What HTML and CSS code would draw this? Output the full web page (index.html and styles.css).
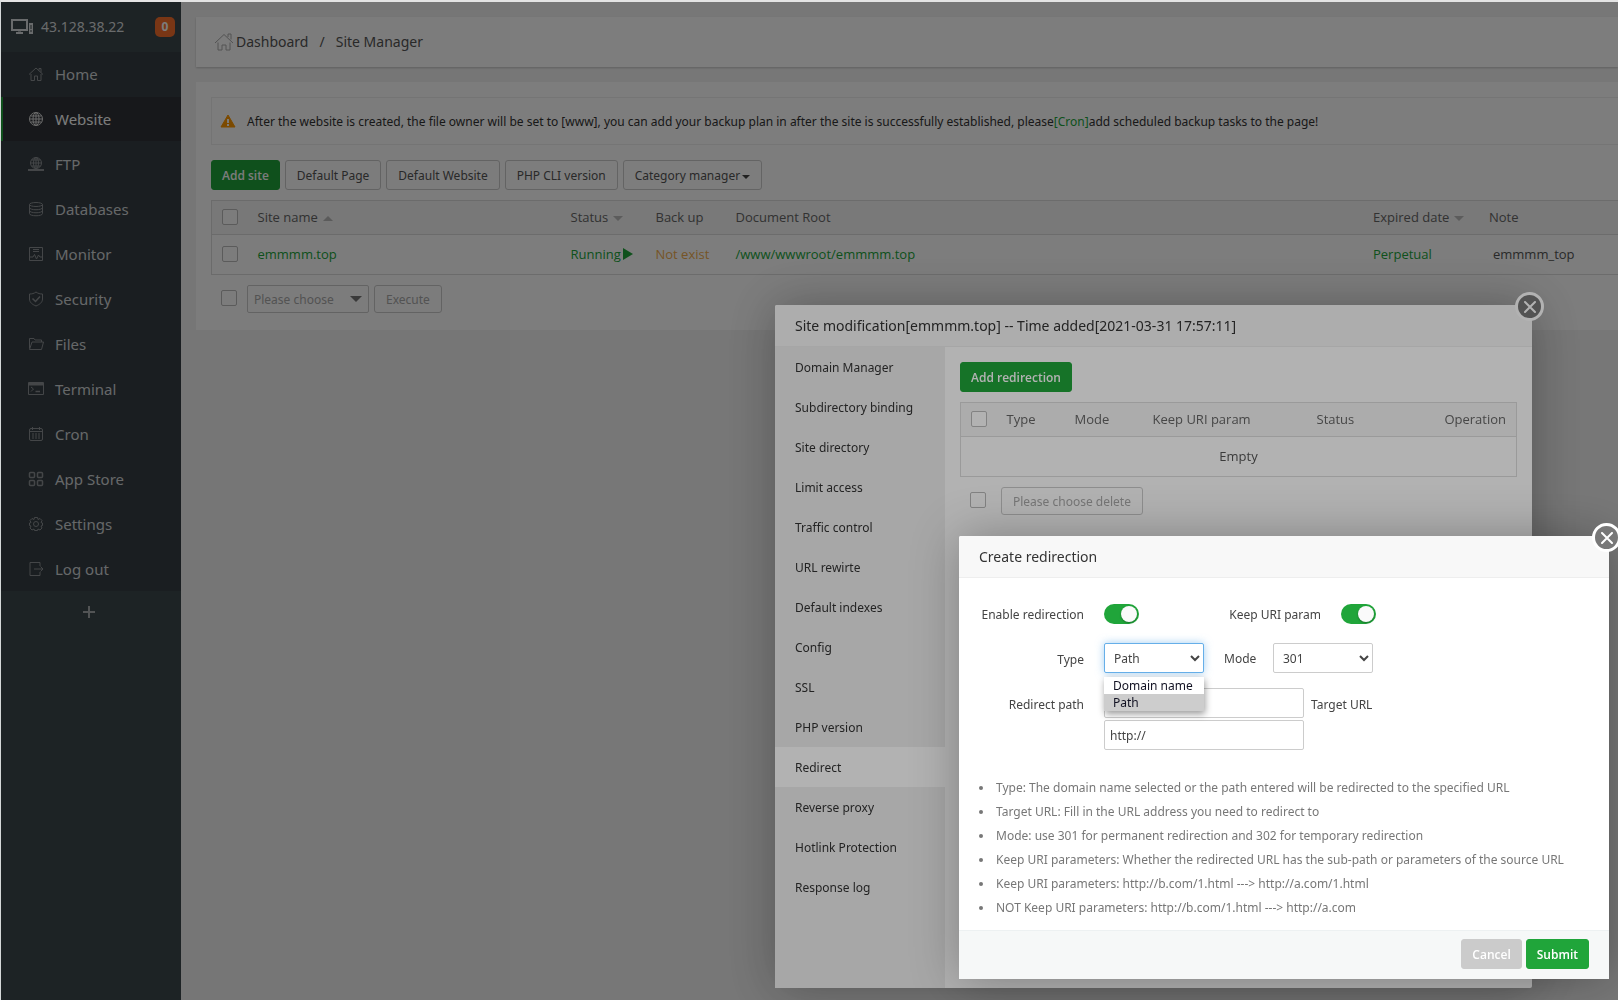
FILE: index.html
```html
<!DOCTYPE html>
<html lang="en">
<head>
<meta charset="utf-8">
<title>Site Manager</title>
<link rel="stylesheet" href="styles.css">
</head>
<body>
<div class="app">
  <aside class="sidebar">
    <div class="server">
      <svg class="server-icon" width="24" height="18" viewBox="0 0 24 18" fill="none" stroke="currentColor" stroke-width="2"><path d="M2 2h15v10H2z"/><path d="M6 15h7" /><path d="M8 13h3" stroke-width="1"/><path d="M19 5h4v11h-4z" fill="currentColor" stroke="none"/><path d="M21 7v4M20 13h2" stroke="#3d484d" stroke-width="1"/></svg>
      <span class="server-ip">43.128.38.22</span>
      <span class="server-badge">0</span>
    </div>
    <nav class="menu">
      <a href="#"><svg class="icon" viewBox="0 0 16 16"><path d="M1 8.500 8 2l7 6.500M3 8v6.500h3.500V10h3v4.500H13V8M11 4.500v-2h2v4"/></svg>Home</a>
      <a href="#" class="active"><svg class="icon" viewBox="0 0 16 16"><circle cx="8" cy="8" r="6.500"/><ellipse cx="8" cy="8" rx="3" ry="6.500"/><path d="M8 1.500v13M1.500 8h13M2.500 5h11M2.500 11h11"/></svg>Website</a>
      <a href="#"><svg class="icon" viewBox="0 0 16 16"><circle cx="8" cy="7" r="5.500"/><ellipse cx="8" cy="7" rx="2.500" ry="5.500"/><path d="M8 1.500v11M2.500 7h11M3.500 4h9M3.500 10h9"/><path d="M0 14h16" stroke-width="2"/></svg>FTP</a>
      <a href="#"><svg class="icon" viewBox="0 0 16 16"><ellipse cx="8" cy="3.500" rx="6.500" ry="2"/><path d="M1.500 3.500v9c0 3 13 3 13 0v-9M1.500 6.500c0 3 13 3 13 0M1.500 9.500c0 3 13 3 13 0"/></svg>Databases</a>
      <a href="#"><svg class="icon" viewBox="0 0 16 16"><path d="M1.500 1.500h13v13h-13zM5 3.500h6M5 5.500h6M2 11h3l1.500-2.500L8.500 13l2-4 1.500 2h2"/></svg>Monitor</a>
      <a href="#"><svg class="icon" viewBox="0 0 16 16"><path d="M8 1c2 1.500 4 2 6.500 2v5c0 3.500-3 5.500-6.500 7-3.500-1.500-6.500-3.500-6.500-7V3C4 3 6 2.500 8 1z"/><path d="M4.500 7.500l3 3 4.500-5" stroke-width="1.500"/></svg>Security</a>
      <a href="#"><svg class="icon" viewBox="0 0 16 16"><path d="M1.500 12.500v-10H6l1 1.500h6.500v2M1.500 13.500 4 6h11.500l-2 7.500z"/></svg>Files</a>
      <a href="#"><svg class="icon" viewBox="0 0 16 16"><path d="M.5 1.500h15v12H.5zM3 6l2.500 2L3 10.500"/><path d="M7.500 10.500h4.500" stroke-width="1.500"/><path d="M1 3h14" stroke-width="3"/></svg>Terminal</a>
      <a href="#"><svg class="icon" viewBox="0 0 16 16"><rect x="1.500" y="2.500" width="13" height="12" rx="1.500"/><path d="M4.500 1v3M11.500 1v3M1.500 5.500h13"/><path d="M4 8h8M4 10h8M4 12h8" stroke-dasharray="2 1"/></svg>Cron</a>
      <a href="#"><svg class="icon icon-bold" viewBox="0 0 16 16"><rect x="1.500" y="1.500" width="5" height="5" rx="1"/><rect x="9.500" y="1.500" width="5" height="5" rx="1"/><rect x="1.500" y="9.500" width="5" height="5" rx="1"/><rect x="9.500" y="9.500" width="5" height="5" rx="1"/></svg>App Store</a>
      <a href="#"><svg class="icon" viewBox="0 0 16 16"><path d="M6.500 1.500h3l.5 2 2-1 2 2-1 2 1.500.5v2.500l-1.500.5 1 2-2 2-2-1-.5 1.500h-3L6 13l-2 1-2-2 1-2-1.500-.5V7L3 6.500l-1-2 2-2 2 1z"/><circle cx="8" cy="8" r="2.500"/></svg>Settings</a>
      <a href="#"><svg class="icon" viewBox="0 0 16 16"><path d="M12 5V1.500H2v13h10V11M6 8h9M12.500 5.500 15 8l-2.500 2.500"/></svg>Log out</a>
    </nav>
    <button class="menu-add" type="button" aria-label="Add menu item"><svg width="14" height="14" viewBox="0 0 14 14" stroke="currentColor" stroke-width="2"><path d="M7 1v12M1 7h12"/></svg></button>
  </aside>

  <main class="main">
    <div class="crumbs">
      <svg class="crumb-icon" viewBox="0 0 20 20"><path d="M1 11 10 2.500 19 11M4 10.500V18h4v-5h4v5h4v-7.500M14 5V2h3v5.500"/></svg>
      <a href="#">Dashboard</a><span class="crumb-sep">/</span><a href="#">Site Manager</a>
    </div>

    <section class="panel">
      <div class="notice">
        <svg width="16" height="14" viewBox="0 0 16 14"><path d="M8 1 15 13H1z" fill="#ff9900" stroke="#ff9900" stroke-linejoin="round"/><path d="M8 5v4M8 10v2" stroke="#fff" stroke-width="2"/></svg>
        <p>After the website is created, the file owner will be set to [www], you can add your backup plan in after the site is successfully established, please<a href="#">[Cron]</a>add scheduled backup tasks to the page!</p>
      </div>
      <div class="toolbar">
        <button type="button" class="btn btn-green">Add site</button>
        <button type="button" class="btn">Default Page</button>
        <button type="button" class="btn">Default Website</button>
        <button type="button" class="btn">PHP CLI version</button>
        <button type="button" class="btn">Category manager<span class="caret"></span></button>
      </div>
      <table class="grid sites">
        <colgroup><col class="c-check"><col class="c-name"><col class="c-status"><col class="c-backup"><col><col class="c-expire"><col class="c-note"></colgroup>
        <thead><tr>
          <th><input type="checkbox" aria-label="Select all sites"></th>
          <th>Site name<span class="sort sort-up"></span></th>
          <th>Status<span class="sort"></span></th>
          <th>Back up</th><th>Document Root</th>
          <th>Expired date<span class="sort"></span></th>
          <th>Note</th>
        </tr></thead>
        <tbody><tr>
          <td><input type="checkbox" aria-label="Select emmmm.top"></td>
          <td><a href="#">emmmm.top</a></td>
          <td><a href="#" class="running">Running<span class="play"></span></a></td>
          <td><a href="#" class="warn">Not exist</a></td>
          <td><a href="#">/www/wwwroot/emmmm.top</a></td>
          <td><a href="#">Perpetual</a></td>
          <td><span class="note">emmmm_top</span></td>
        </tr></tbody>
      </table>
      <div class="batch">
        <input type="checkbox" aria-label="Select all for batch">
        <select class="batch-select" aria-label="Batch action" disabled><option>Please choose</option></select>
        <button type="button" class="btn btn-small" disabled>Execute</button>
      </div>
    </section>
  </main>
</div>

<div class="shade"></div>
<section class="modal modal-site" role="dialog" aria-labelledby="site-title">
  <button class="close" type="button" aria-label="Close"><svg width="12" height="12" viewBox="0 0 12 12" stroke="currentColor" stroke-width="2" stroke-linecap="round"><path d="m1 1 10 10M11 1 1 11"/></svg></button>
  <h2 class="modal-title" id="site-title">Site modification[emmmm.top] -- Time added[2021-03-31 17:57:11]</h2>
  <div class="site-body">
    <nav class="tabs">
      <a href="#">Domain Manager</a>
      <a href="#">Subdirectory binding</a>
      <a href="#">Site directory</a>
      <a href="#">Limit access</a>
      <a href="#">Traffic control</a>
      <a href="#">URL rewirte</a>
      <a href="#">Default indexes</a>
      <a href="#">Config</a>
      <a href="#">SSL</a>
      <a href="#">PHP version</a>
      <a href="#" class="active">Redirect</a>
      <a href="#">Reverse proxy</a>
      <a href="#">Hotlink Protection</a>
      <a href="#">Response log</a>
    </nav>
    <div class="site-content">
      <button type="button" class="btn btn-green">Add redirection</button>
      <table class="grid redirects">
        <colgroup><col class="r-check"><col class="r-type"><col class="r-mode"><col class="r-keep"><col class="r-status"><col></colgroup>
        <thead><tr>
          <th><input type="checkbox" aria-label="Select all redirects"></th>
          <th>Type</th><th>Mode</th><th>Keep URI param</th><th>Status</th><th class="right">Operation</th>
        </tr></thead>
        <tbody><tr><td colspan="6" class="center">Empty</td></tr></tbody>
      </table>
      <div class="batch batch-redirect">
        <input type="checkbox" aria-label="Select all for delete">
        <button type="button" class="btn btn-small" disabled>Please choose delete</button>
      </div>
    </div>
  </div>
</section>

<div class="shade"></div>
<section class="modal modal-create" role="dialog" aria-labelledby="create-title">
  <button class="close" type="button" aria-label="Close"><svg width="12" height="12" viewBox="0 0 12 12" stroke="currentColor" stroke-width="2" stroke-linecap="round"><path d="m1 1 10 10M11 1 1 11"/></svg></button>
  <h2 class="modal-title" id="create-title">Create redirection</h2>
  <form class="form">
    <div class="row row-switch">
      <label class="label" for="enable">Enable redirection</label>
      <input class="switch" type="checkbox" id="enable" checked>
      <label class="label label-keep" for="keep">Keep URI param</label>
      <input class="switch" type="checkbox" id="keep" checked>
    </div>
    <div class="row">
      <label class="label" for="type">Type</label>
      <div class="select-wrap">
        <select class="field focused" id="type"><option>Domain name</option><option selected>Path</option></select>
        <ul class="options" role="listbox" aria-label="Type">
          <li role="option">Domain name</li>
          <li role="option" aria-selected="true" class="selected">Path</li>
        </ul>
      </div>
      <label class="label-mode" for="mode">Mode</label>
      <select class="field" id="mode"><option>301</option><option>302</option></select>
    </div>
    <div class="row row-path">
      <label class="label" for="path">Redirect path</label>
      <input class="field wide" type="text" id="path">
      <label class="label-target" for="target">Target URL</label>
    </div>
    <div class="row row-target">
      <input class="field wide" type="text" id="target" value="http://">
    </div>
    <ul class="help">
      <li>Type: The domain name selected or the path entered will be redirected to the specified URL</li>
      <li>Target URL: Fill in the URL address you need to redirect to</li>
      <li>Mode: use 301 for permanent redirection and 302 for temporary redirection</li>
      <li>Keep URI parameters: Whether the redirected URL has the sub-path or parameters of the source URL</li>
      <li>Keep URI parameters: http://b.com/1.html ---&gt; http://a.com/1.html</li>
      <li>NOT Keep URI parameters: http://b.com/1.html ---&gt; http://a.com</li>
    </ul>
    <div class="actions">
      <button type="button" class="btn btn-grey">Cancel</button>
      <button type="submit" class="btn btn-green">Submit</button>
    </div>
  </form>
</section>
</body>
</html>
```
FILE: styles.css
```css
* { box-sizing: border-box; }

body {
  margin: 0;
  min-height: 100vh;
  display: flex;
  border-top: 2px solid #e4e4e4;
  border-left: 1px solid #d4d8d8;
  background: #f3f3f3;
  color: #555;
  font: 12px/18px "Noto Sans", "Open Sans", sans-serif;
  overflow: hidden;
}

a { color: #20a53a; text-decoration: none; }
button, input, select { font: inherit; margin: 0; }

.app { display: flex; flex: 1; min-width: 0; }

/* Sidebar */
.sidebar { width: 180px; flex: none; background: #3d484d; }
.server {
  display: flex;
  align-items: center;
  height: 50px;
  padding: 0 6px 0 9px;
  color: #d8dcde;
  font-size: 14px;
}
.server-icon { margin-right: 7px; }
.server-badge {
  margin-left: auto;
  width: 20px;
  height: 20px;
  border-radius: 5px;
  background: #f8702c;
  color: #fff;
  font-size: 12px;
  font-weight: 700;
  line-height: 20px;
  text-align: center;
}
.menu { background: #373f45; }
.menu a {
  display: flex;
  align-items: center;
  height: 44px;
  margin-bottom: 1px;
  padding-left: 25px;
  border-left: 2px solid transparent;
  color: #d2d6d8;
  font-size: 15px;
}
.menu a.active { background: #303338; border-color: #20a53a; color: #fff; }
.icon {
  width: 16px;
  height: 16px;
  margin-right: 11px;
  fill: none;
  stroke: #8c9194;
  stroke-width: 1;
}
.icon-bold { stroke-width: 1.5; }
.active .icon { stroke: #dcdcdc; }
.menu-add {
  display: flex;
  align-items: center;
  justify-content: center;
  width: 100%;
  height: 40px;
  padding: 0 4px 0 0;
  border: 0;
  background: none;
  color: #a8adb0;
}

/* Main column */
.main { flex: 1; min-width: 0; padding: 15px 0 0 15px; }
.crumbs {
  display: flex;
  align-items: center;
  height: 50px;
  margin-bottom: 15px;
  padding-left: 18px;
  background: #fff;
  box-shadow: 0 1px 2px rgba(0, 0, 0, .2);
  font-size: 14px;
}
.crumbs a { color: #555; }
.crumb-icon { width: 20px; height: 20px; margin-right: 2px; fill: none; stroke: #aaa; stroke-width: 1; }
.crumb-sep { margin: 0 11px; }
.panel { padding: 15px 0 17px 15px; background: #fff; }
.notice {
  display: flex;
  align-items: center;
  gap: 11px;
  height: 48px;
  padding-left: 8px;
  border: 1px solid #eee;
  border-right: 0;
  color: #333;
}
.notice p { margin: 0; padding-top: 2px; white-space: nowrap; }
.toolbar { display: flex; gap: 5px; margin: 15px 0 10px; }

.btn {
  height: 30px;
  padding: 2px 11px 0;
  border: 1px solid #ccc;
  border-radius: 3px;
  background: #fff;
  color: #555;
  line-height: 18px;
  white-space: nowrap;
}
.btn-green, .btn-grey { padding: 2px 10px 0; color: #fff; font-family: "Open Sans", sans-serif; font-weight: 600; }
.btn-green { border-color: #20a53a; background: #20a53a; }
.btn-grey { border-color: #cbcbcb; background: #cbcbcb; }
.btn-small { height: 28px; color: #aaa; }
.caret {
  display: inline-block;
  margin-left: 2px;
  border: 4px solid transparent;
  border-top-color: #444;
  border-bottom: 0;
  vertical-align: middle;
}

.grid {
  width: 100%;
  border: 1px solid #ddd;
  border-collapse: collapse;
  table-layout: fixed;
  font-family: "Open Sans", sans-serif;
  font-size: 13px;
}
.grid th { height: 34px; padding: 0 7px 2px; border-bottom: 1px solid #ddd; background: #f6f6f6; color: #666; font-weight: 400; text-align: left; }
.grid td { height: 40px; padding: 0 7px 2px; }
.grid th:first-child input, .grid td:first-child input { margin-left: 3px; }
.grid .right { text-align: right; padding-right: 10px; }
.grid .center { text-align: center; }
.sites { border-right: 0; }
.c-check { width: 39px; }
.c-name { width: 313px; }
.c-status { width: 85px; }
.c-backup { width: 80px; }
.c-expire { width: 116px; }
.c-note { width: 136px; }
.r-check { width: 39px; }
.r-type { width: 68px; }
.r-mode { width: 78px; }
.r-keep { width: 164px; }
.r-status { width: 100px; }
.sort {
  display: inline-block;
  margin-left: 5px;
  border: 5px solid transparent;
  border-top-color: #bbb;
  border-bottom: 0;
  vertical-align: middle;
}
.sort-up { border-top: 0; border-bottom: 5px solid #bbb; }
.running { display: flex; align-items: center; gap: 2px; white-space: nowrap; }
.play { border: 6px solid transparent; border-left: 10px solid #20a53a; border-right: 0; }
.warn { color: #f0ad4e; }
.note { padding-left: 4px; }

input[type="checkbox"]:not(.switch) {
  appearance: none;
  display: block;
  width: 16px;
  height: 16px;
  border: 1px solid #bbb;
  border-radius: 2px;
  background: #fff;
}
.batch { display: flex; align-items: center; gap: 5px; margin-top: 10px; padding-left: 10px; }
.batch > input { margin: 0 5px 2px 0; }
.batch-select {
  appearance: none;
  width: 122px;
  height: 28px;
  padding: 2px 6px 0;
  border: 1px solid #ccc;
  border-radius: 2px;
  background: url("data:image/svg+xml,%3Csvg xmlns='http://www.w3.org/2000/svg' width='12' height='6'%3E%3Cpath d='M0 0h12L6 6z' fill='%23777'/%3E%3C/svg%3E") no-repeat right 6px center;
  color: #aaa;
  opacity: 1;
}

/* Dialogs */
.shade { position: fixed; inset: 2px 0 0 1px; background: rgba(0, 0, 0, .3); }
.modal { position: fixed; border-radius: 2px; background: #fff; box-shadow: 1px 1px 50px rgba(0, 0, 0, .3); }
.modal-site { top: 305px; left: 775px; width: 757px; }
.modal-create { top: 536px; left: 959px; width: 650px; }
.modal-title {
  height: 42px;
  margin: 0;
  padding: 0 20px;
  border-bottom: 1px solid #eee;
  border-radius: 2px 2px 0 0;
  background: #f8f8f8;
  color: #333;
  font-size: 14px;
  font-weight: 400;
  line-height: 41px;
}
.close {
  position: absolute;
  top: -13px;
  right: -12px;
  display: flex;
  align-items: center;
  justify-content: center;
  width: 29px;
  height: 29px;
  padding: 0;
  border: 3px solid #fff;
  border-radius: 50%;
  background: #787878;
  color: #fff;
}

.site-body { display: flex; min-height: 641px; }
.tabs { width: 170px; flex: none; background: #f0f0f0; }
.tabs a { display: block; height: 40px; padding-left: 20px; color: #333; line-height: 42px; }
.tabs a.active { background: #fff; }
.site-content { flex: 1; padding: 15px; }
.site-content .grid { margin-top: 10px; }
.batch-redirect { gap: 10px; }

.form { display: block; }
.row { display: flex; align-items: center; margin-bottom: 15px; color: #444; }
.row-switch { height: 20px; margin: 26px 0 19px; }
.row-path { margin-bottom: 2px; }
.row-target { margin-bottom: 0; padding-left: 145px; }
.label { width: 125px; margin-right: 20px; padding-top: 3px; text-align: right; }
.row-switch .label { padding-top: 1px; }
.label-keep { width: 182px; }
.label-mode { width: 49px; margin-left: 20px; padding-top: 1px; }
.label-target { margin-left: 7px; padding-top: 3px; }
.select-wrap { position: relative; }
.field {
  display: block;
  width: 100px;
  height: 30px;
  padding: 0 5px;
  border: 1px solid #ccc;
  border-radius: 2px;
  background: #fff;
  color: #444;
}
.wide { width: 200px; }
.focused { border-color: #66afe9; box-shadow: 0 0 8px rgba(102, 175, 233, .6); outline: 0; }
.options {
  position: absolute;
  top: 34px;
  left: 0;
  width: 100px;
  margin: 0;
  padding: 0;
  background: #fff;
  box-shadow: 1px 3px 7px rgba(0, 0, 0, .4);
  color: #112;
  line-height: 17px;
  list-style: none;
}
.options li { padding-left: 9px; }
.options .selected { background: #cdcdcd; }
.switch {
  appearance: none;
  width: 35px;
  height: 20px;
  padding: 2px;
  border-radius: 10px;
  background: #20a53a;
}
.switch::before {
  content: "";
  display: block;
  width: 16px;
  height: 16px;
  margin-left: 15px;
  border-radius: 50%;
  background: #fafafa;
  box-shadow: 0 1px 2px rgba(0, 0, 0, .3);
}
.help { margin: 26px 0 10px; padding-left: 35px; color: #777; line-height: 24px; }
.help li { padding-left: 2px; }
.actions {
  display: flex;
  justify-content: flex-end;
  gap: 4px;
  padding: 8px 20px 10px;
  border-top: 1px solid #edf1f2;
  background: #f6f8f8;
}
```
